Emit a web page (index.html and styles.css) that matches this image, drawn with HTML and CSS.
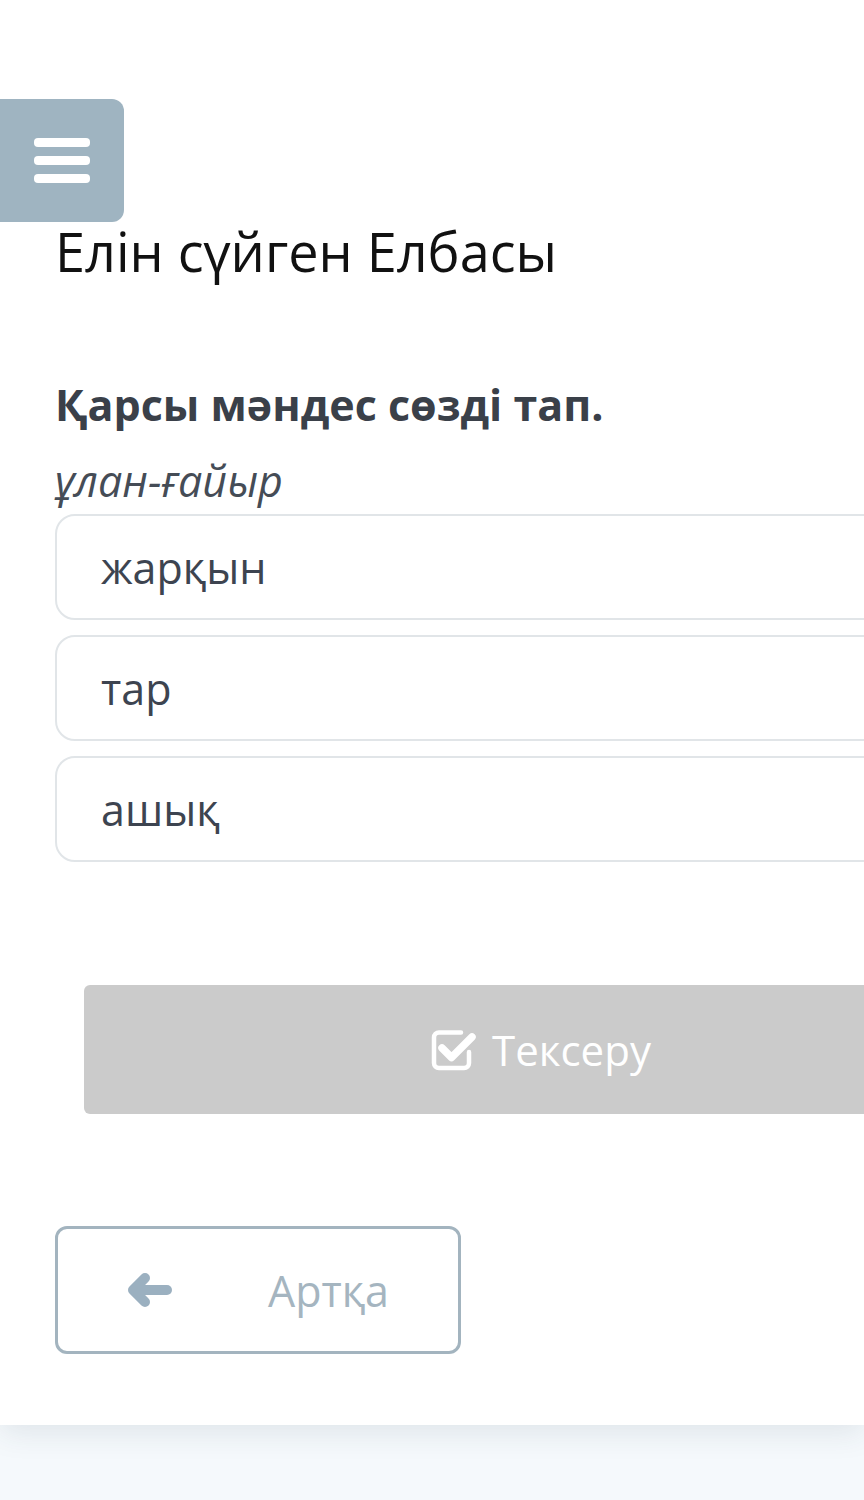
FILE: index.html
```html
<!DOCTYPE html>
<html lang="kk">
<head>
    <meta charset="UTF-8">
    <meta name="viewport" content="width=device-width, initial-scale=1.0">
    <title>Елін сүйген Елбасы</title>
    <link rel="stylesheet" href="styles.css">
</head>
<body>
    <div class="page">
        <button class="menu-btn" aria-label="Menu">
            <span></span>
            <span></span>
            <span></span>
        </button>

        <div class="content">
            <h1 class="lesson-title">Елін сүйген Елбасы</h1>

            <div class="question">Қарсы мәндес сөзді тап.</div>
            <div class="word">ұлан-ғайыр</div>

            <div class="options">
                <div class="option">жарқын</div>
                <div class="option">тар</div>
                <div class="option">ашық</div>
            </div>

            <button class="check-btn">
                <svg class="check-icon" viewBox="0 0 46 44" width="46" height="44">
                    <path d="M30 4.5 H8 a5 5 0 0 0 -5 5 V35 a5 5 0 0 0 5 5 H33 a5 5 0 0 0 5 -5 V24" fill="none" stroke="#fff" stroke-width="4.5" stroke-linecap="round"/>
                    <path d="M11 20 L20.5 29.5 L41 9" fill="none" stroke="#fff" stroke-width="7.5" stroke-linecap="round" stroke-linejoin="round"/>
                </svg>
                <span>Тексеру</span>
            </button>

            <button class="back-btn">
                <svg class="arrow-icon" viewBox="0 0 44 34" width="44" height="34">
                    <path d="M17 5 L5 17 L17 29" fill="none" stroke="#9bb0c0" stroke-width="10" stroke-linecap="round" stroke-linejoin="round"/>
                    <path d="M7 17 H39" fill="none" stroke="#9bb0c0" stroke-width="10" stroke-linecap="round"/>
                </svg>
                <span>Артқа</span>
            </button>
        </div>
    </div>
</body>
</html>
```

FILE: styles.css
```css
* {
    margin: 0;
    padding: 0;
    box-sizing: border-box;
    font-family: 'Open Sans', sans-serif;
}

body {
    background-color: #f5f9fc;
    min-height: 100vh;
    overflow-x: hidden;
}

.page {
    position: relative;
    background-color: #ffffff;
    height: 1425px;
    box-shadow: 0 8px 28px rgba(40, 60, 80, 0.1);
}

.menu-btn {
    position: absolute;
    top: 99px;
    left: 0;
    width: 124px;
    height: 123px;
    background-color: #9fb4c1;
    border: none;
    border-radius: 0 12px 12px 0;
    display: flex;
    flex-direction: column;
    justify-content: center;
    align-items: center;
    gap: 9px;
    cursor: pointer;
}

.menu-btn span {
    display: block;
    width: 56px;
    height: 9px;
    background-color: #ffffff;
    border-radius: 4px;
}

.content {
    padding: 214px 0 0 55px;
    width: 1027px;
}

.lesson-title {
    font-size: 54px;
    font-weight: 400;
    line-height: 74px;
    color: #111111;
    margin-bottom: 88px;
}

.question {
    font-size: 43px;
    font-weight: 700;
    line-height: 58px;
    color: #3a4049;
    margin-bottom: 22px;
}

.word {
    font-size: 43px;
    font-style: italic;
    line-height: 50px;
    color: #454c56;
    margin-bottom: 8px;
}

.options {
    display: flex;
    flex-direction: column;
    gap: 15px;
}

.option {
    height: 106px;
    display: flex;
    align-items: center;
    padding-left: 44px;
    border: 2px solid #e1e5e8;
    border-radius: 20px;
    font-size: 43px;
    color: #3d4450;
    cursor: pointer;
}

.check-btn {
    margin: 123px 0 0 29px;
    width: 914px;
    height: 129px;
    background-color: #cbcbcb;
    border: none;
    border-radius: 6px;
    display: flex;
    justify-content: center;
    align-items: center;
    gap: 15px;
    font-size: 42px;
    color: #ffffff;
}

.back-btn {
    margin-top: 112px;
    width: 406px;
    height: 128px;
    background-color: transparent;
    border: 3px solid #a3b4bf;
    border-radius: 12px;
    display: flex;
    justify-content: space-between;
    align-items: center;
    padding: 0 69px 0 70px;
    font-size: 43px;
    color: #a5b5c0;
    cursor: pointer;
}
```
